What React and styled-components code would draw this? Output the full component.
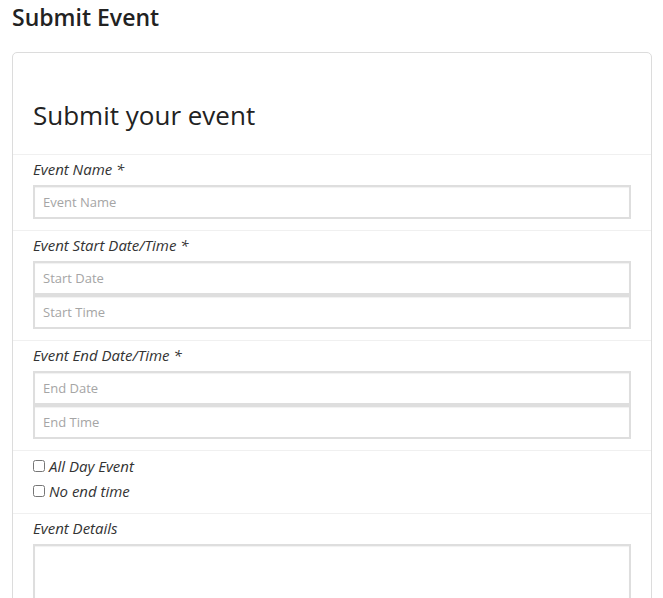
import React from "react";
import styled, { createGlobalStyle } from "styled-components";

const Global = createGlobalStyle`
  html, body { margin: 0; padding: 0; background: #fff; }
  body { font-family: "Open Sans", "Liberation Sans", sans-serif; color: #222; }
  * { box-sizing: border-box; }
`;

const Page = styled.div`
  padding: 0 11px 0 12px;
`;

const PageTitle = styled.h1`
  margin: 0 0 18px;
  font-size: 23px;
  line-height: 34px;
  font-weight: 600;
  color: #222;
`;

const Card = styled.div`
  border: 1px solid #dcdcdc;
  border-radius: 5px;
  background: #fff;
`;

const CardHeader = styled.div`
  padding: 42px 20px 19px;
`;

const CardTitle = styled.h2`
  margin: 0;
  font-size: 26px;
  line-height: 40px;
  font-weight: 400;
  color: #222;
`;

const Section = styled.div`
  border-top: 1px solid #f0f0f0;
  padding: ${(p) => (p.$compact ? "2px 20px 10px" : "4px 20px 11px")};
`;

const Label = styled.div`
  font-style: italic;
  font-size: 15px;
  line-height: 20px;
  color: #333;
  margin-bottom: 6px;
`;

const Input = styled.input`
  display: block;
  width: 100%;
  height: 34px;
  margin: 0;
  padding: 0 8px;
  border: 2px solid #dedede;
  border-radius: 0;
  box-shadow: inset 0 1px 1px rgba(0, 0, 0, 0.06);
  font-family: inherit;
  font-size: 13px;
  color: #333;
  background: #fff;
  outline: none;
  &::placeholder { color: #a5a5a5; }
`;

const TextArea = styled.textarea`
  display: block;
  width: 100%;
  height: 120px;
  margin: 0;
  padding: 8px;
  border: 2px solid #dedede;
  box-shadow: inset 0 1px 1px rgba(0, 0, 0, 0.06);
  font-family: inherit;
  font-size: 13px;
  resize: none;
  outline: none;
`;

const CheckRow = styled.label`
  display: flex;
  align-items: center;
  height: 25px;
  font-style: italic;
  font-size: 15px;
  color: #333;
`;

const Check = styled.input`
  margin: 0 4px 0 0;
  width: 12px;
  height: 12px;
`;

export default function App() {
  return (
    <Page>
      <Global />
      <PageTitle>Submit Event</PageTitle>
      <Card>
        <CardHeader>
          <CardTitle>Submit your event</CardTitle>
        </CardHeader>
        <Section>
          <Label>Event Name *</Label>
          <Input placeholder="Event Name" />
        </Section>
        <Section>
          <Label>Event Start Date/Time *</Label>
          <Input placeholder="Start Date" />
          <Input placeholder="Start Time" />
        </Section>
        <Section>
          <Label>Event End Date/Time *</Label>
          <Input placeholder="End Date" />
          <Input placeholder="End Time" />
        </Section>
        <Section $compact>
          <CheckRow><Check type="checkbox" />All Day Event</CheckRow>
          <CheckRow><Check type="checkbox" />No end time</CheckRow>
        </Section>
        <Section>
          <Label>Event Details</Label>
          <TextArea />
        </Section>
      </Card>
    </Page>
  );
}
